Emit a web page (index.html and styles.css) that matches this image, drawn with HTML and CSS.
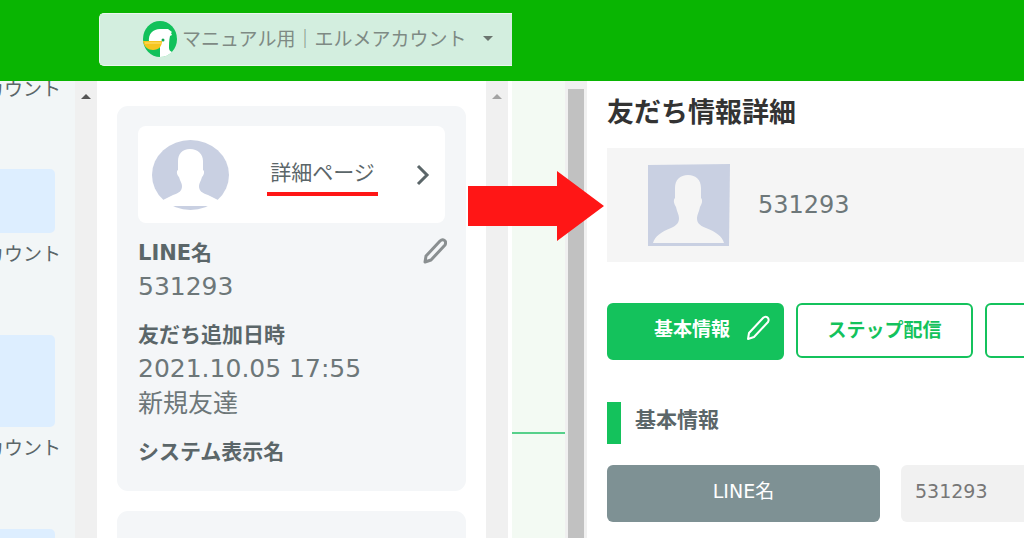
FILE: index.html
```html
<!doctype html>
<html lang="ja">
  <head>
    <meta charset="utf-8" />
    <title>友だち情報詳細</title>
    <link rel="stylesheet" href="styles.css">
  </head>
  <body>
    <div class="split">
      <section class="pane">
        <header class="topbar">
          <button class="account-btn" type="button">
            <svg class="account-logo" viewBox="0 0 34 36" aria-hidden="true">
              <ellipse cx="17" cy="18" rx="17" ry="18" fill="#12c15b" />
              <path d="M6 21C5 13 10 8 17 8h8l4 3-1 1 1 2-2 1c-1 4-1 9-1 12 0 2 1 3 3 4-3 3-7 5-12 5V25z" fill="#fff" />
              <path d="M0 20h19c0 5-3 9-9 9-5 0-9-3-10-9z" fill="#f5c51f" />
              <path d="M2 22h16" stroke="#ffe37a" stroke-width="1" />
              <circle cx="20" cy="19" r="1.5" fill="#12a552" />
            </svg>
            <span>マニュアル用｜エルメアカウント</span>
            <span class="caret"></span>
          </button>
        </header>

        <div class="pane-body">
          <div class="chat">
            <div class="chat-name">カウント</div>
            <div class="bubble"></div>
            <div class="chat-name">カウント</div>
            <div class="bubble bubble-large"></div>
            <div class="chat-name">カウント</div>
            <div class="bubble"></div>
          </div>
          <div class="scrollbar"><span class="scroll-up"></span></div>

          <div class="profile">
            <div class="card">
              <a class="detail-link" href="#detail">
                <svg class="avatar-round" viewBox="0 0 77 70" aria-hidden="true">
                  <ellipse cx="38.500" cy="35" rx="38.500" ry="35" fill="#c9d0e2" />
                  <path d="M38 9c8 0 13 5 13 12v9c2 1 1 5-1 7-1 4-3 6-3 9 0 5 3 7 9 9l10 5v6H11v-6l10-5c6-2 9-4 9-9 0-3-2-5-3-9-2-2-3-6-1-7v-9c0-7 4-12 12-12z" fill="#fff" />
                </svg>
                <span class="detail-text">詳細ページ</span>
                <svg class="chevron" viewBox="0 0 14 22" aria-hidden="true">
                  <path d="M2 2l9 9-9 9" />
                </svg>
              </a>
              <div class="card-title">
                LINE名
                <button class="edit-btn" type="button" aria-label="編集">
                  <svg class="pencil" viewBox="0 0 24 26" aria-hidden="true">
                    <path d="M2 24l1-6L17 3c3-3 7 0 5 4L8 22z" />
                  </svg>
                </button>
              </div>
              <div class="card-value">531293</div>
              <div class="card-title">友だち追加日時</div>
              <div class="card-value">2021.10.05 17:55</div>
              <div class="card-value">新規友達</div>
              <div class="card-title">システム表示名</div>
            </div>
            <div class="card"></div>
          </div>
          <div class="scrollbar"><span class="scroll-up muted"></span></div>
        </div>
      </section>

      <section class="pane">
        <header class="topbar"></header>
        <div class="pane-body">
          <div class="side"></div>
          <div class="scrollbar scrollbar-thumb"></div>
          <main class="detail" id="detail">
            <h1>友だち情報詳細</h1>
            <div class="user">
              <svg class="avatar" viewBox="0 0 82 82" aria-hidden="true">
                <path d="M0 1L82 0l-1 82H0z" fill="#c9d0e2" />
                <path d="M40 11c8 0 13 5 13 13v10c2 2 1 6-1 9-1 5-3 8-3 11 0 5 2 7 9 10 10 4 16 8 18 15H5c2-7 8-11 18-15 6-3 8-5 8-10 0-3-2-6-3-11-2-3-3-7-1-9V24c0-8 5-13 13-13z" fill="#f5f5f5" />
              </svg>
              <span>531293</span>
            </div>
            <div class="tabs">
              <button class="tab active" type="button">
                基本情報
                <svg class="pencil" viewBox="0 0 24 26" aria-hidden="true">
                  <path d="M2 24l1-6L17 3c3-3 7 0 5 4L8 22z" />
                </svg>
              </button>
              <button class="tab" type="button">ステップ配信</button>
              <button class="tab" type="button" aria-label="その他"></button>
            </div>
            <h2>基本情報</h2>
            <div class="field">
              <label for="lineName">LINE名</label>
              <input id="lineName" type="text" value="531293" readonly />
            </div>
          </main>
        </div>
      </section>
    </div>

    <svg class="arrow" viewBox="0 0 136 70" aria-hidden="true">
      <path d="M0 15h89V0l47 35-47 35V55H0z" fill="#ff1616" />
    </svg>
  </body>
</html>
```
FILE: styles.css
```css
* {
  margin: 0;
  padding: 0;
  box-sizing: border-box;
}

body {
  font-family: 'DejaVu Sans', 'Noto Sans CJK JP', sans-serif;
  background: #fff;
  color: #5b6669;
  overflow: hidden;
}

button,
input {
  font: inherit;
  color: inherit;
  border: none;
  background: none;
}

button {
  cursor: pointer;
}

.split {
  display: grid;
  grid-template-columns: 1fr 1fr;
  height: 100vh;
}

.pane {
  display: flex;
  flex-direction: column;
  min-width: 0;
  overflow: hidden;
}

.topbar {
  display: flex;
  flex-shrink: 0;
  height: 81px;
  padding: 13px 0 15px 99px;
  background: #09b502;
}

.account-btn {
  display: flex;
  flex: 1;
  align-items: center;
  gap: 5px;
  padding: 0 0 2px 43px;
  border: 1px solid #eaf8ef;
  border-right: none;
  border-radius: 5px 0 0 5px;
  background: #d3eedf;
  color: #7e8a84;
  font-size: 19px;
  line-height: 28px;
  white-space: nowrap;
}

.account-logo {
  width: 34px;
  height: 36px;
}

.caret {
  margin-left: 12px;
  border: 5px solid transparent;
  border-top-color: #6b756f;
  border-bottom: none;
}

.pane-body {
  display: flex;
  flex: 1;
  min-height: 0;
}

/* chat column */
.chat {
  display: flex;
  flex-direction: column;
  align-items: flex-end;
  width: 75px;
  overflow: hidden;
  background: #f2f6f7;
}

.chat-name {
  flex-shrink: 0;
  height: 102px;
  padding: 7px 14px 0 0;
  font-size: 19px;
  line-height: 28px;
  white-space: nowrap;
}

.chat-name:first-child {
  height: 88px;
  padding-top: 0;
  line-height: 16px;
}

.bubble {
  flex-shrink: 0;
  width: 55px;
  height: 64px;
  margin-right: 20px;
  border-radius: 0 5px 5px 0;
  background: #def;
}

.bubble-large {
  height: 92px;
}

.scrollbar {
  display: flex;
  flex-shrink: 0;
  justify-content: center;
  width: 22px;
  padding-top: 13px;
  background: #f0f0f0;
}

.scroll-up {
  height: 5px;
  border: 5px solid transparent;
  border-top: none;
  border-bottom-color: #555;
}

.scroll-up.muted {
  border-bottom-color: #a3a3a3;
}

.scrollbar-thumb::before {
  content: '';
  width: 16px;
  margin-top: -5px;
  background: #c1c1c1;
}

/* profile column */
.profile {
  flex: 1;
  min-width: 0;
  padding: 25px 20px 0 20px;
}

.pane:first-child .scrollbar:last-child {
  margin-right: 4px;
}

.card {
  min-height: 80px;
  margin-bottom: 20px;
  padding: 20px 21px 23px;
  border-radius: 11px;
  background: #f4f6f8;
}

.detail-link {
  display: flex;
  align-items: center;
  justify-content: space-between;
  height: 97px;
  margin-bottom: 11px;
  padding: 0 15px 0 14px;
  border-radius: 8px;
  background: #fff;
  color: inherit;
  font-size: 21px;
  text-decoration: none;
}

.avatar-round {
  width: 77px;
  height: 70px;
}

.detail-text {
  padding: 0 3px;
  border-bottom: 4px solid #ff1616;
  line-height: 38px;
}

.chevron {
  width: 14px;
  height: 22px;
  fill: none;
  stroke: #5b6669;
  stroke-width: 3;
}

.card-title {
  display: flex;
  align-items: center;
  justify-content: space-between;
  height: 35px;
  padding-bottom: 2px;
  font-size: 21px;
  font-weight: bold;
}

.card-value {
  height: 35px;
  color: #6d7779;
  font-size: 25px;
  line-height: 35px;
}

.card-value + .card-title {
  margin-top: 12px;
}

.edit-btn {
  display: flex;
  margin-right: -2px;
}

.pencil {
  width: 24px;
  height: 26px;
  fill: none;
  stroke: currentColor;
  stroke-width: 2;
  stroke-linejoin: round;
}

.edit-btn .pencil {
  stroke: #8a8f91;
  stroke-width: 3;
}

/* detail page */
.side {
  width: 53px;
  height: 353px;
  border-bottom: 2px solid #56d08a;
  background: #f3faf3;
  box-shadow: 0 200px #f3faf3;
}

.detail {
  flex: 1;
  min-width: 0;
  padding: 12px 0 0 20px;
  overflow: hidden;
}

h1 {
  margin-bottom: 15px;
  color: #333;
  font-size: 27px;
  line-height: 40px;
}

.user {
  display: flex;
  align-items: center;
  gap: 28px;
  height: 114px;
  padding-left: 41px;
  background: #f5f5f5;
  color: #6d7779;
  font-size: 24px;
}

.avatar {
  width: 82px;
  height: 82px;
}

.tabs {
  display: flex;
  align-items: flex-start;
  gap: 12px;
  margin-top: 41px;
}

.tab {
  display: flex;
  flex: 0 0 177px;
  align-items: center;
  justify-content: center;
  height: 55px;
  padding-bottom: 5px;
  border: 2px solid #14c25c;
  border-radius: 6px;
  color: #14c25c;
  font-size: 19px;
  font-weight: bold;
}

.tab.active {
  gap: 16px;
  justify-content: flex-end;
  height: 57px;
  padding: 0 12px 8px 0;
  background: #14c25c;
  color: #fff;
}

h2 {
  height: 42px;
  margin: 42px 0 21px;
  padding-left: 14px;
  border-left: 14px solid #14c25c;
  font-size: 21px;
  line-height: 36px;
}

.field {
  display: flex;
  gap: 21px;
  height: 57px;
  font-size: 19px;
}

.field label {
  flex: 0 0 273px;
  border-radius: 6px;
  background: #7e9194;
  color: #fff;
  line-height: 52px;
  text-align: center;
}

.field input {
  flex: 1;
  min-width: 0;
  padding: 0 0 5px 14px;
  border-radius: 6px 0 0 6px;
  background: #f1f1f1;
  color: #777;
}

/* arrow between the two screens */
.arrow {
  position: absolute;
  top: 171px;
  left: calc(50% - 44px);
  width: 136px;
  height: 70px;
}
```
